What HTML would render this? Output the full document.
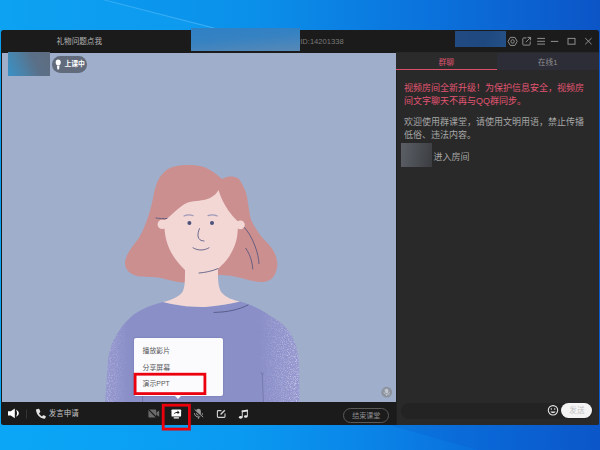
<!DOCTYPE html>
<html lang="zh-CN">
<head>
<meta charset="utf-8">
<title>群课堂</title>
<style>
html,body{margin:0;padding:0;}
body{width:600px;height:450px;overflow:hidden;position:relative;background:#0a8ee8;
 font-family:"Liberation Sans","Noto Sans CJK SC",sans-serif;}
.abs{position:absolute;}
#desk{left:0;top:0;width:600px;height:450px;}
#win{left:1.2px;top:29.5px;width:597.4px;height:395px;background:#1b1b1b;border-radius:2.5px;overflow:hidden;}
.t{position:absolute;white-space:nowrap;line-height:1;}
#video{left:2.4px;top:52.5px;width:393.6px;height:349.5px;background:#9faeca;}
#panel{left:396px;top:52px;width:202.5px;height:372.5px;background:#292929;border-bottom-right-radius:2.5px;}
#tab1{left:396px;top:52.5px;width:101px;height:16.5px;background:#2b2b2b;border-bottom:1.3px solid #d9506b;}
#tab2{left:497px;top:52.5px;width:101.5px;height:17.8px;background:#2d2d37;}
.msg{position:absolute;left:404px;width:190px;font-size:9px;line-height:13.2px;white-space:nowrap;}
</style>
</head>
<body>
<!-- desktop wallpaper -->
<svg id="desk" class="abs" width="600" height="450" viewBox="0 0 600 450">
 <defs>
  <linearGradient id="dg" x1="0" y1="0" x2="1" y2="0">
   <stop offset="0" stop-color="#0b9ff1"/>
   <stop offset="0.42" stop-color="#0b90ea"/>
   <stop offset="0.72" stop-color="#0b72dc"/>
   <stop offset="1" stop-color="#0c55c7"/>
  </linearGradient>
  <linearGradient id="dg2" x1="0" y1="0" x2="1" y2="0">
   <stop offset="0" stop-color="#0ba7f6"/>
   <stop offset="0.4" stop-color="#0a9af1"/>
   <stop offset="0.6" stop-color="#0a86e8"/>
   <stop offset="0.8" stop-color="#0a6edb"/>
   <stop offset="1" stop-color="#0b59cb"/>
  </linearGradient>
 </defs>
 <rect width="600" height="225" fill="url(#dg)"/>
 <rect y="225" width="600" height="225" fill="url(#dg2)"/>
 <polygon points="0,0 104,0 222,30 0,30" fill="#14a8f6" opacity="0.3"/>
 <polygon points="103,0 106.5,0 224,30 219,30" fill="#58bcfa" opacity="0.6"/>
 <polygon points="385,424 600,424 600,450 478,450" fill="#0a4cc0" opacity="0.16"/>
</svg>

<!-- application window -->
<div id="win" class="abs"></div>
<div id="video" class="abs"></div>
<div id="panel" class="abs"></div>
<div class="abs" style="left:396px;top:70px;width:0.9px;height:354.5px;background:#1f1f1f;"></div>
<div id="tab1" class="abs"></div>
<div id="tab2" class="abs"></div>


<!-- illustration + icons -->
<svg class="abs" style="left:0;top:0" width="600" height="450" viewBox="0 0 600 450">
 <defs>
  <clipPath id="vc"><rect x="2.5" y="52.5" width="393.5" height="349.5"/></clipPath>
  <linearGradient id="sw" x1="0" y1="0" x2="1" y2="0">
   <stop offset="0" stop-color="#9598ce"/>
   <stop offset="0.12" stop-color="#8a8fc8"/>
   <stop offset="0.8" stop-color="#8a8fc8"/>
   <stop offset="1" stop-color="#9699cf"/>
  </linearGradient>
  <linearGradient id="swm" x1="0" y1="0" x2="1" y2="0">
   <stop offset="0" stop-color="#fff" stop-opacity="0.7"/>
   <stop offset="0.12" stop-color="#fff" stop-opacity="0"/>
   <stop offset="0.78" stop-color="#fff" stop-opacity="0"/>
   <stop offset="1" stop-color="#fff" stop-opacity="1"/>
  </linearGradient>
  <mask id="grainmask" maskUnits="userSpaceOnUse" x="100" y="295" width="205" height="110">
   <rect x="105" y="295" width="195" height="110" fill="url(#swm)"/>
  </mask>
  <filter id="grain" x="0" y="0" width="100%" height="100%">
   <feTurbulence type="fractalNoise" baseFrequency="0.85" numOctaves="2" seed="7" result="n"/>
   <feColorMatrix in="n" type="matrix" values="0 0 0 0 0.64  0 0 0 0 0.64  0 0 0 0 0.86  0 0 0 2.4 -1.1"/>
   <feComposite in2="SourceGraphic" operator="in"/>
  </filter>
 </defs>
 <g clip-path="url(#vc)">
  <!-- hair -->
  <path fill="#cc8f8f" d="M186.0,165.0C191.0,164.7 196.0,165.2 200.0,166.0C204.0,166.8 206.8,168.2 210.0,170.0C213.2,171.8 217.0,175.0 219.0,176.5C221.0,178.0 220.8,178.7 222.0,178.8C223.2,178.9 224.5,177.6 226.0,177.2C227.5,176.8 229.3,176.5 231.0,176.6C232.7,176.7 234.5,176.9 236.0,177.6C237.5,178.2 238.3,177.9 240.0,180.5C241.7,183.1 244.6,188.6 246.0,193.0C247.4,197.4 247.7,202.1 248.6,206.7C249.5,211.3 249.6,215.9 251.4,220.5C253.2,225.1 256.5,230.0 259.7,234.4C262.9,238.8 268.0,243.1 270.8,247.0C273.6,250.9 275.4,254.5 276.4,258.0C277.4,261.5 277.6,264.6 277.0,267.8C276.4,271.1 274.8,275.2 272.8,277.5C270.8,279.8 268.3,281.1 265.0,281.7C261.7,282.3 257.1,281.7 252.8,281.0C248.5,280.3 243.2,278.4 239.0,277.5C234.8,276.6 231.3,276.0 227.8,275.6C224.3,275.2 222.6,274.7 218.0,275.3C213.4,275.9 205.5,277.8 200.0,279.0C194.5,280.2 189.5,282.1 185.0,282.4C180.5,282.7 177.0,281.7 173.0,281.0C169.0,280.3 165.0,278.7 161.0,278.0C157.0,277.3 153.0,277.3 149.0,277.0C145.0,276.7 140.5,277.0 137.0,276.0C133.5,275.0 130.0,273.3 128.0,271.0C126.0,268.7 124.7,265.5 125.0,262.0C125.3,258.5 127.5,254.3 130.0,250.0C132.5,245.7 137.2,241.0 140.0,236.0C142.8,231.0 145.0,225.5 147.0,220.0C149.0,214.5 150.7,208.2 152.0,203.0C153.3,197.8 153.7,193.3 155.0,189.0C156.3,184.7 157.5,180.5 160.0,177.0C162.5,173.5 165.7,170.0 170.0,168.0C174.3,166.0 181.0,165.3 186.0,165.0Z"/>
  <!-- sweater -->
  <path fill="url(#sw)" d="M163,302C175,305.2 190,307.3 205,306.9C218,306.3 230,304 240,301.6C250,304.5 258,308 266,313C272,317 276,319 280,322C286,327 289.5,331 292,336C294.5,341 296,345 297,350C298,354 298.7,357 299,360L299.5,403L105,403L108,360C108.5,356 109,353 110,350C111,346 112.5,342 115,338C117.5,333 120.5,328 124,324C128,319.5 131,316.5 136,313C140.5,310 145,308 150,306C154,304.5 158,303.2 163,302Z"/>
  <g mask="url(#grainmask)"><path filter="url(#grain)" fill="#000" d="M163,302C175,305.2 190,307.3 205,306.9C218,306.3 230,304 240,301.6C250,304.5 258,308 266,313C272,317 276,319 280,322C286,327 289.5,331 292,336C294.5,341 296,345 297,350C298,354 298.7,357 299,360L299.5,403L105,403L108,360C108.5,356 109,353 110,350C111,346 112.5,342 115,338C117.5,333 120.5,328 124,324C128,319.5 131,316.5 136,313C140.5,310 145,308 150,306C154,304.5 158,303.2 163,302Z"/></g>
  <!-- skin -->
  <circle cx="162.3" cy="224.4" r="4.7" fill="#f2d7d5"/>
  <circle cx="240.4" cy="224.8" r="4.4" fill="#f2d7d5"/>
  <path fill="#f2d7d5" d="M163.5,221C167,219 172,214 178,209C182,205.5 186,202.5 192,201.5C198,200.6 205,200.5 210,198C214,196 217,193 218.5,190C220.5,197 224,204 228,210C231,214 234,218 238,221.5L237.8,229C237.5,236 236.5,241 234.7,245.5C232,252.5 228,259.5 222,265C220.5,266.5 219,268 218,269L218,276C218,283 219,289 222,293C226,297.5 233,300 240,301.6C230,304 218,306.3 205,306.9C190,307.3 175,305.2 163,302C172,300 180,296.5 183,291C185,286 185,280 185,270C178,263.5 172,255 169,248C166.5,242 165,236 164.5,229Z"/>
  <!-- face details -->
  <g fill="none" stroke="#4d527c" stroke-width="0.8" stroke-linecap="round">
   <path d="M156,218C160,218.6 163,218.8 167,218.5"/>
   <path d="M199.5,228.6C198.5,231 197.8,233.5 198,236C198.3,239.5 201,241 204,241"/>
   <path d="M193,247.8C198,250.8 204,250.8 209,247.8"/>
   <path d="M199,273C205,272.5 211,271.5 218,268.6"/>
   <path d="M244.4,227.5C248.5,232 252,238 255,246C257.5,252.5 258.6,258 259,263.6"/>
   <path d="M245.8,248.3C248.5,252 250.5,257 251.5,261C252.3,264 252.6,266.5 252.8,269"/>
   <path d="M214,312.4C220,312.3 226,311.8 232,310.5C238,309.2 243,307.5 248,305"/>
   <path d="M262.2,374.5L263.4,402M261.2,372.3L262.2,374.6L263.6,372.8" stroke="#6a6c9c" stroke-width="0.6"/>
   <path d="M142.6,396L142.6,402" stroke="#6a6c9c" stroke-width="0.6"/>
  </g>
  <g fill="none" stroke="#9f99b9" stroke-width="1.2" stroke-linecap="round">
   <path d="M184,216C187,214.6 190,214.6 193,215.6"/>
   <path d="M208,215.6C211,214.6 214.5,214.8 217.4,216"/>
  </g>
  <circle cx="189.4" cy="223" r="2" fill="#4d527c"/>
  <circle cx="212" cy="223" r="2" fill="#4d527c"/>
  <!-- muted mic badge -->
  <circle cx="386.7" cy="392.2" r="5.4" fill="#8c929e"/>
 </g>
</svg>

<!-- title bar -->
<div class="t" style="left:56.5px;top:38.1px;font-size:7.6px;color:#b4b4b4;">礼物问题点我</div>
<div class="t" style="left:300.2px;top:37.6px;font-size:7.6px;color:#787878;">ID:14201338</div>
<div class="abs" style="left:191.2px;top:27.8px;width:108.8px;height:23.2px;background:linear-gradient(175deg,#2f80c5 0%,#3682c2 45%,#5889b6 100%);"></div>
<div class="abs" style="left:455px;top:31px;width:50.5px;height:16.3px;background:linear-gradient(100deg,#214b82 0%,#1e4880 60%,#245088 100%);"></div>

<!-- tabs -->
<div class="t" style="left:438.4px;top:58.6px;font-size:7.9px;color:#dc546f;">群聊</div>
<div class="t" style="left:538px;top:58.8px;font-size:7.6px;color:#8e8e8e;">在线1</div>

<!-- chat messages -->
<div class="msg" style="top:81.6px;color:#e25572;">视频房间全新升级！为保护信息安全，视频房<br>间文字聊天不再与QQ群同步。</div>
<div class="msg" style="top:116.1px;color:#a6a6a6;">欢迎使用群课堂，请使用文明用语，禁止传播<br>低俗、违法内容。</div>
<div class="abs" style="left:401.3px;top:143px;width:30.7px;height:23.6px;background:linear-gradient(100deg,#5c5f66 0%,#484b50 60%,#3a3c40 100%);"></div>
<div class="t" style="left:433.5px;top:152.9px;font-size:9px;color:#a6a6a6;">进入房间</div>

<!-- chat input -->
<div class="abs" style="left:401px;top:402.5px;width:192px;height:16px;background:#232323;border-radius:8px;"></div>
<div class="abs" style="left:561.3px;top:403px;width:30.7px;height:14.7px;background:#f4f4f4;border-radius:7.5px;"></div>
<div class="t" style="left:569.3px;top:407.4px;font-size:7.6px;color:#c2c2c2;">发送</div>

<!-- class status -->
<div class="abs" style="left:8px;top:52.3px;width:42px;height:23.7px;background:linear-gradient(65deg,#3891c6 0%,#4a83aa 30%,#5a7088 62%,#5e6c7e 100%);"></div>
<div class="abs" style="left:52px;top:56px;width:35.2px;height:16.6px;background:#626b7b;border-radius:8.3px;"></div>
<div class="t" style="left:64.4px;top:61px;font-size:6.8px;font-weight:bold;color:#ffffff;">上课中</div>

<!-- bottom toolbar text -->
<div class="t" style="left:48.7px;top:410.4px;font-size:7.5px;color:#c4c4c4;">发言申请</div>
<div class="abs" style="left:342.8px;top:407.5px;width:44.2px;height:13.2px;border:1px solid #595959;border-radius:8px;"></div>
<div class="t" style="left:352.2px;top:412px;font-size:7px;color:#8c8c8c;">结束课堂</div>


<!-- icons -->
<svg class="abs" style="left:0;top:0" width="600" height="450" viewBox="0 0 600 450">
 <!-- title bar icons -->
 <g fill="none" stroke="#8e8e8e" stroke-width="1">
  <path d="M508,41.4L510.3,37.4L514.9,37.4L517.2,41.4L514.9,45.4L510.3,45.4Z" stroke-linejoin="round"/>
  <circle cx="512.6" cy="41.4" r="1.7"/>
  <path d="M526.5,37.9L523.6,37.9Q522.8,37.9 522.8,38.7L522.8,44.3Q522.8,45.1 523.6,45.1L529.4,45.1Q530.2,45.1 530.2,44.3L530.2,41.5"/>
  <path d="M525.8,42.2L530.4,37.6M527.6,37.4L530.6,37.4L530.6,40.4"/>
  <path d="M537.2,38.4L545,38.4M537.2,41.3L545,41.3M537.2,44.1L545,44.1"/>
  <path d="M550.8,41.4L558.3,41.4"/>
  <rect x="568" y="38.4" width="7" height="5.8"/>
  <path d="M585.2,38.1L591.6,44.3M591.6,38.1L585.2,44.3"/>
 </g>
 <!-- class status mic -->
 <g fill="#ffffff">
  <rect x="55.7" y="59.4" width="5" height="5.8" rx="2.5"/>
  <path d="M56.9,65.5L59.5,65.5L59.1,69.3Q58.2,69.8 57.3,69.3Z"/>
 </g>
 <!-- speaker -->
 <g fill="#ffffff">
  <path d="M8,411.2L10.8,411.2L14.8,408.4L14.8,418.2L10.8,415.4L8,415.4Z"/>
  <path d="M16,409.8C19.8,411.2 19.8,415.4 16,416.8C17.4,414.6 17.4,412 16,409.8Z"/>
 </g>
 <rect x="26.2" y="409.5" width="0.8" height="9" fill="#3c3c3c"/>
 <!-- phone -->
 <path fill="#e4e4e4" d="M36.6,409.2L38.6,408.8Q39.2,408.8 39.5,409.5L40.3,411.6Q40.4,412.2 39.9,412.6L39,413.3C39.6,414.7 40.6,415.7 42,416.4L42.8,415.4Q43.2,415 43.8,415.2L45.4,416Q46,416.4 45.8,417L45.2,418.2Q44.8,418.8 44,418.7C39.6,418 36.4,414.4 36,410Q36,409.4 36.6,409.2Z"/>
 <!-- camera off -->
 <g fill="#6a6a6a">
  <rect x="148.4" y="409.6" width="7.8" height="8" rx="0.8"/>
  <path d="M156.4,412.6L159.2,410.6L159.2,416.8L156.4,414.8Z"/>
 </g>
 <path d="M148.2,409.2L157,418" stroke="#1b1b1b" stroke-width="1.1"/>
 <!-- share screen -->
 <rect x="171.5" y="409.4" width="9.6" height="7.2" rx="0.9" fill="#ffffff"/>
 <rect x="173.6" y="417.2" width="5.4" height="1.2" rx="0.5" fill="#ffffff"/>
 <path d="M173.6,414.6C174.2,412.6 175.8,411.8 177.6,411.8L177.6,410.6L179.6,412.4L177.6,414.2L177.6,413C176,413 174.6,413.4 173.6,414.6Z" fill="#1b1b1b"/>
 <!-- mic off (toolbar) -->
 <g fill="#989898">
  <rect x="196.1" y="408.8" width="4.8" height="6.8" rx="2.4"/>
  <path d="M194.5,413.2C194.5,418.2 202.5,418.2 202.5,413.2" fill="none" stroke="#989898" stroke-width="1"/>
  <rect x="197.9" y="416.8" width="1.2" height="2"/>
 </g>
 <path d="M194.2,410.2L202.6,417.8" stroke="#1b1b1b" stroke-width="1.5"/>
 <path d="M194.6,409.4L203.2,417.2" stroke="#989898" stroke-width="1"/>
 <!-- edit -->
 <g fill="none" stroke="#d4d4d4" stroke-width="1.1">
  <path d="M221.4,410.6L218.2,410.6Q217.4,410.6 217.4,411.4L217.4,416.6Q217.4,417.4 218.2,417.4L224.2,417.4Q225,417.4 225,416.6L225,413.6"/>
  <path d="M220.6,414.4L224.8,410.2" stroke-width="1.4"/>
 </g>
 <!-- music -->
 <g fill="#e8e8e8">
  <path d="M241.8,410.4L247.8,409.6L247.8,411.4L241.8,412.2Z"/>
  <rect x="241.8" y="410.6" width="0.9" height="6.4"/>
  <rect x="246.9" y="410" width="0.9" height="6.2"/>
  <ellipse cx="240.7" cy="417.3" rx="1.8" ry="1.35"/>
  <ellipse cx="245.8" cy="416.5" rx="1.8" ry="1.35"/>
 </g>
 <!-- muted mic badge on video -->
 <g>
  <rect x="385.1" y="388.6" width="3.2" height="4.8" rx="1.6" fill="#c2c6ce"/>
  <path d="M383.9,391.8C383.9,395.4 389.5,395.4 389.5,391.8" fill="none" stroke="#c2c6ce" stroke-width="0.8"/>
  <rect x="386.3" y="394.4" width="0.8" height="1.6" fill="#c2c6ce"/>
  <path d="M383.7,389.4L389.7,395" stroke="#c2c6ce" stroke-width="0.7"/>
 </g>
 <!-- smiley -->
 <g>
  <circle cx="553" cy="410.3" r="4.7" fill="none" stroke="#e4e4e4" stroke-width="1.1"/>
  <circle cx="551.3" cy="409" r="0.75" fill="#e4e4e4"/>
  <circle cx="554.7" cy="409" r="0.75" fill="#e4e4e4"/>
  <path d="M550.4,411.4C551.6,413.6 554.4,413.6 555.6,411.4Z" fill="#e4e4e4"/>
 </g>
</svg>

<!-- popup menu -->
<div class="abs" style="left:133.7px;top:338.4px;width:89.3px;height:57.8px;background:#fbfbfe;border-radius:2px;box-shadow:0 0 2px rgba(60,60,110,0.35);"></div>
<div class="abs" style="left:174.6px;top:396px;width:0;height:0;border-left:3.6px solid transparent;border-right:3.6px solid transparent;border-top:3px solid #fbfbfe;"></div>
<div class="t" style="left:142.6px;top:348px;font-size:6.9px;color:#585858;">播放影片</div>
<div class="t" style="left:142.6px;top:364.6px;font-size:6.9px;color:#585858;">分享屏幕</div>
<div class="t" style="left:142.6px;top:381px;font-size:6.9px;color:#585858;">演示PPT</div>
<svg class="abs" style="left:0;top:0" width="600" height="450" viewBox="0 0 600 450">
 <rect x="135.1" y="374.2" width="69.8" height="19.4" fill="none" stroke="#ec000d" stroke-width="2.8"/>
 <rect x="163.2" y="405.2" width="26.2" height="23.9" fill="none" stroke="#ec000d" stroke-width="2.8"/>
</svg>

</body>
</html>
